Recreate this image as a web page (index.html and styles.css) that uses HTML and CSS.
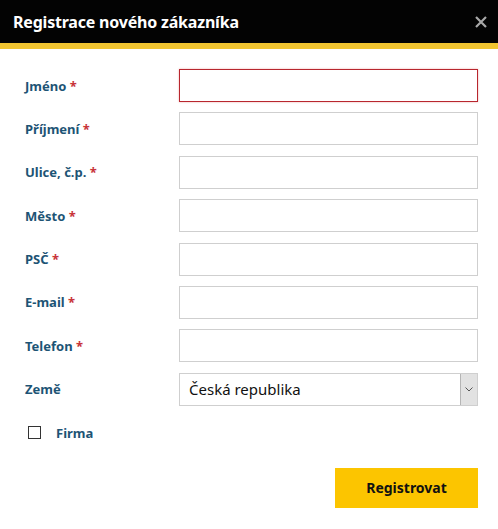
FILE: index.html
```html
<!DOCTYPE html>
<html lang="cs">
<head>
<meta charset="utf-8">
<link rel="stylesheet" href="styles.css">
</head>
<body>
<div class="modal">
  <div class="header">
    <span class="title">Registrace nového zákazníka</span>
    <span class="close">
      <svg width="12" height="12" viewBox="0 0 12 12"><path d="M1 1L11 11M11 1L1 11" stroke="#a8a8a8" stroke-width="2.2"/></svg>
    </span>
  </div>
  <form class="form">
    <label class="lbl">Jméno <span class="req">*</span></label><input class="inp invalid" type="text">
    <label class="lbl">Příjmení <span class="req">*</span></label><input class="inp" type="text">
    <label class="lbl">Ulice, č.p. <span class="req">*</span></label><input class="inp" type="text">
    <label class="lbl">Město <span class="req">*</span></label><input class="inp" type="text">
    <label class="lbl">PSČ <span class="req">*</span></label><input class="inp" type="text">
    <label class="lbl">E-mail <span class="req">*</span></label><input class="inp" type="text">
    <label class="lbl">Telefon <span class="req">*</span></label><input class="inp" type="text">
    <label class="lbl">Země</label>
    <div class="select">
      <span class="sel-text">Česká republika</span>
      <span class="sel-btn"><svg width="8" height="5" viewBox="0 0 8 5"><path d="M0.5 0.5L4 4L7.5 0.5" fill="none" stroke="#555" stroke-width="1"/></svg></span>
    </div>
  </form>
  <div class="check-row">
    <span class="box"></span>
    <span class="check-lbl">Firma</span>
  </div>
  <div class="actions">
    <button class="btn" type="button">Registrovat</button>
  </div>
</div>
</body>
</html>
```

FILE: styles.css
```css
html, body {
  margin: 0;
  padding: 0;
  background: #fff;
}
body {
  font-family: "Noto Sans", "Open Sans", sans-serif;
}
.modal {
  width: 498px;
}
.header {
  height: 43px;
  background: #030303;
  border-bottom: 6px solid #f1c531;
  display: flex;
  align-items: center;
  justify-content: space-between;
  padding: 0 11px 0 13px;
}
.title {
  color: #fff;
  font-weight: 700;
  font-size: 16px;
  letter-spacing: -0.2px;
}
.close {
  display: flex;
  align-items: center;
}
.form {
  display: grid;
  grid-template-columns: 154px 299px;
  grid-auto-rows: 33px;
  row-gap: 10.4px;
  padding: 20px 0 0 25px;
  margin: 0;
  align-items: center;
}
.lbl {
  color: #1d5475;
  font-weight: 700;
  font-size: 13px;
}
.req {
  color: #c8343a;
}
.inp {
  box-sizing: border-box;
  height: 33px;
  width: 299px;
  border: 1px solid #cfcfcf;
  margin: 0;
  padding: 0 8px;
  font: inherit;
  outline: none;
}
.inp.invalid {
  border-color: #b8262e;
  box-shadow: 0 0 2px rgba(220, 60, 60, 0.4);
}
.select {
  box-sizing: border-box;
  height: 33px;
  width: 299px;
  border: 1px solid #cfcfcf;
  display: flex;
  align-items: stretch;
}
.sel-text {
  flex: 1;
  display: flex;
  align-items: center;
  padding-left: 9px;
  font-size: 15px;
  color: #111;
}
.sel-btn {
  width: 16px;
  background: #e2e2e2;
  border-left: 1px solid #b5b5b5;
  display: flex;
  align-items: center;
  justify-content: center;
}
.check-row {
  display: flex;
  align-items: center;
  gap: 15px;
  padding: 18px 0 0 28px;
}
.box {
  box-sizing: border-box;
  width: 13px;
  height: 13px;
  border: 1px solid #333;
  background: #fff;
}
.check-lbl {
  color: #1d5475;
  font-weight: 700;
  font-size: 13px;
}
.actions {
  display: flex;
  justify-content: flex-end;
  padding: 26px 20px 0 0;
}
.btn {
  width: 143px;
  height: 40px;
  background: #fcc500;
  border: none;
  font-family: inherit;
  font-weight: 700;
  font-size: 14px;
  color: #111;
  padding: 0;
}
```
